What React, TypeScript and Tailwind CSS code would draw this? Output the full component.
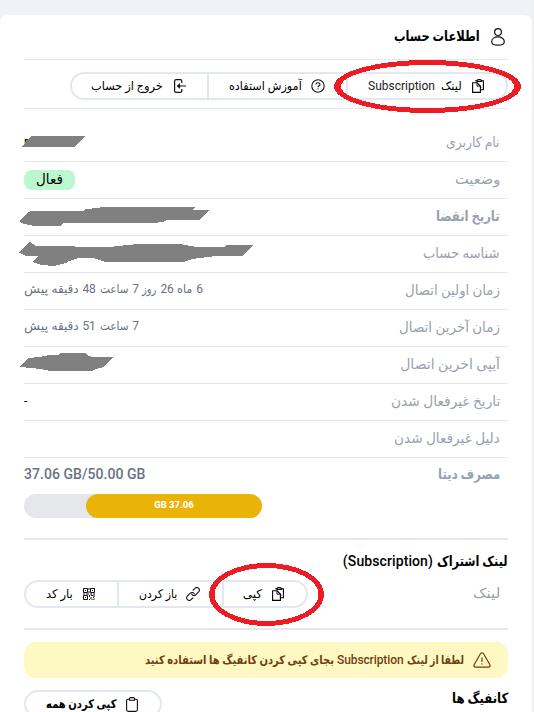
import { useLayoutEffect, useRef, useState, type ReactNode } from "react";

/** A run of Persian text that is condensed to the width of its box. */
function Fa({ className, children }: { className: string; children: string }) {
  const box = useRef<HTMLSpanElement>(null);
  const run = useRef<HTMLSpanElement>(null);
  const [scale, setScale] = useState(1);
  useLayoutEffect(() => {
    if (box.current && run.current) {
      setScale(box.current.clientWidth / run.current.offsetWidth);
    }
  }, [children]);
  return (
    <span ref={box} dir="rtl" className={`block shrink-0 whitespace-nowrap ${className}`}>
      <span ref={run} className="inline-block origin-right" style={{ transform: `scaleX(${scale})` }}>
        {children}
      </span>
    </span>
  );
}

function CopyIcon() {
  return (
    <svg className="h-[14px] w-3 shrink-0" viewBox="0 0 12 14" fill="none" stroke="black" strokeWidth="1.1">
      <path d="M3.7 2.2V1.7h1.1C5.2.9 6 .6 7.2.6s2 .3 2.4 1.1h1.8v9H9" />
      <path d="M4.8 2.5h4.8M4.8 1.7v1.1M9.6 1.7v1.1" />
      <path d="M.6 3.7h4.5l3.3 3.4v6.3H.6z" />
      <path d="M5 3.8v3.3h3.3M5.2 4l4.3 4.2" strokeWidth="0.9" />
    </svg>
  );
}

function HelpIcon() {
  return (
    <svg className="size-[14px] shrink-0" viewBox="0 0 14 14" fill="none" stroke="#111" strokeWidth="1.1">
      <circle cx="7" cy="7" r="6.2" />
      <path d="M5 5.6c0-1.1.8-1.9 2-1.9s2 .7 2 1.7c0 1.4-2 1.4-2 2.9" />
      <path d="M7 9.5v1.1" />
    </svg>
  );
}

function ExitIcon() {
  return (
    <svg className="h-[14px] w-3 shrink-0" viewBox="0 0 12 14" fill="none" stroke="#111" strokeWidth="1.2">
      <path d="M7.8 4V2.2C7.8 1.2 7.3.6 6.3.6H2.2C1.2.6.6 1.2.6 2.2v9.6c0 1 .6 1.6 1.6 1.6h4.1c1 0 1.5-.6 1.5-1.6V10" />
      <path d="M12 7H3.5" />
      <path d="M5.8 4.6 3 7l2.8 2.4Z" fill="#111" strokeWidth="0.5" />
    </svg>
  );
}

function LinkIcon() {
  return (
    <svg className="size-[14px] shrink-0" viewBox="0 0 14 14" fill="none" stroke="#111" strokeWidth="1.1" strokeLinecap="round">
      <path d="M7.1 3.2 9 1.4a2.5 2.5 0 0 1 3.6 3.5L9.7 7.8a2.5 2.5 0 0 1-4-.7" />
      <path d="m6.9 10.8-1.9 1.8a2.5 2.5 0 0 1-3.6-3.5l2.9-2.9a2.5 2.5 0 0 1 4 .7" />
    </svg>
  );
}

function QrIcon() {
  return (
    <svg className="size-3 shrink-0" viewBox="0 0 12 12" fill="none" stroke="#111" strokeWidth="1">
      <path d="M.5.5h4v4h-4zM7.5.5h4v4h-4zM.5 7.5h4v4h-4z" />
      <path d="M2 2.5h1M9 2.5h1M2 9.5h1M0 6h2M3 6h3M7 6h2M10 6h2M6 0v2M6 3v2M6.5 7v2M8 7.5h2M11 7v2M7 10h2M10 9.5h1M6.5 11v1M8.5 11.5h1M11 10.5V12" />
    </svg>
  );
}

function Item({ className, icon, children }: { className: string; icon: ReactNode; children: ReactNode }) {
  return (
    <button className={`flex h-full shrink-0 items-center border-slate-200 ${className}`}>
      {icon}
      {children}
    </button>
  );
}

function Row({ label, children }: { label: ReactNode; children?: ReactNode }) {
  return (
    <div className="flex h-[37px] items-center justify-between border-b border-gray-200 pr-2 pb-0.5 text-gray-400">
      {label}
      {children}
    </div>
  );
}

function Ago({ children }: { children: ReactNode }) {
  return <div className="-mt-0.5 flex items-center gap-[3.7px] text-xs text-gray-500">{children}</div>;
}

function Marks() {
  return (
    <svg className="pointer-events-none absolute top-0 left-0 h-[712px] w-[534px]" viewBox="0 0 534 712" shapeRendering="crispEdges">
      <g fill="#808080">
        <path d="M22 146.5 31 136H85.5L75.5 146.5Z" />
        <path d="M19 221 29 212 31 211H83L86 209 98 208 102 207H195L192 210H209L199 220H167L163 222 153 223H63L60 226H34L24 224Z" />
        <path d="M19 252.5 30 242 36 246H73L76 247H109L128 245 137 244H181L190 246 197 247H224L227 245H253L242 256H216L192 259 184 262H105L93 258H79L69 261 66 263 54 266 42 265 32 262 38 256H26Z" />
        <path d="M19 367 28 358 39 357 50 355 58 355 60 353H85L89 356 93 357H113L104 367 96 369 92 371H50L40 369 32 368Z" />
      </g>
      <g fill="#ed1c24" fillRule="evenodd">
        <path d="M334 86.5a93.5 26.5 0 0 1 187 0a93.5 26.5 0 0 1-187 0ZM341 86.500a86.500 21.500 0 0 0 173 0a86.500 21.500 0 0 0-173 0Z" />
        <path d="M209 594.500a57.500 31.500 0 0 1 115 0a57.500 31.500 0 0 1-115 0ZM214.500 594.500a52 26.500 0 0 0 104 0a52 26.500 0 0 0-104 0Z" />
      </g>
    </svg>
  );
}

export default function App() {
  return (
    <div
      dir="rtl"
      className="relative h-[712px] w-[534px] overflow-hidden bg-[#eff3f8] font-['Roboto','DejaVu_Sans',sans-serif]"
    >
      <div className="h-[712px] border-r-2 border-[#f0f0f0] pt-[15px]">
        <main className="h-[697px] rounded-t-lg bg-white px-6 text-black">
          <header className="flex h-[45px] items-center border-b border-gray-200 pr-[3px]">
            <svg className="h-[18px] w-[14px]" viewBox="0 0 14 18" fill="none" stroke="#111" strokeWidth="1.2">
              <circle cx="7" cy="4.1" r="3.4" />
              <path d="M7 8.9c3.5 0 6.3 1.9 6.3 4.5 0 3-2.5 3.8-6.3 3.8S.7 16.4.7 13.4C.7 10.8 3.5 8.9 7 8.9Z" />
            </svg>
            <Fa className="mr-[11px] mb-0.5 w-[86px] text-[14px] font-bold">اطلاعات حساب</Fa>
          </header>

          <section className="flex h-[49px] items-center border-b border-gray-200 text-xs">
            <div className="mt-[3px] flex h-7 w-[438px] overflow-hidden rounded-full border-2 border-slate-200">
              <Item className="w-[158px] pr-[22px]" icon={<CopyIcon />}>
                <Fa className="mr-[10px] w-[21px]">لینک</Fa>
                <span className="mr-[6px] text-[#222]">Subscription</span>
              </Item>
              <Item className="w-[139px] border-r-2 pr-[21px]" icon={<HelpIcon />}>
                <Fa className="mr-[9px] w-[73px]">آموزش استفاده</Fa>
              </Item>
              <Item className="grow border-r-2 pr-[21px]" icon={<ExitIcon />}>
                <Fa className="mr-[11px] w-[72px]">خروج از حساب</Fa>
              </Item>
            </div>
          </section>

          <section className="pt-4 text-[14px]">
            <Row label={<Fa className="w-[54px]">نام کاربری</Fa>}>
              <span className="text-xs text-black">r</span>
            </Row>
            <Row label={<Fa className="w-[45px]">وضعیت</Fa>}>
              <span className="mt-0.5 flex h-5 w-[51px] items-center justify-center rounded-lg bg-[#bbf7d0] pb-0.5 text-black">
                <Fa className="w-[27px]">فعال</Fa>
              </span>
            </Row>
            <Row label={<Fa className="w-[64px] font-bold">تاریخ انقضا</Fa>} />
            <Row label={<Fa className="w-[77px]">شناسه حساب</Fa>} />
            <Row label={<Fa className="w-[95px]">زمان اولین اتصال</Fa>}>
              <Ago>
                <span>6</span>
                <Fa className="w-[15px]">ماه</Fa>
                <span>26</span>
                <Fa className="w-[14px]">روز</Fa>
                <span>7</span>
                <Fa className="w-[29px]">ساعت</Fa>
                <span>48</span>
                <Fa className="w-[27px]">دقیقه</Fa>
                <Fa className="w-[24px]">پیش</Fa>
              </Ago>
            </Row>
            <Row label={<Fa className="w-[101px]">زمان آخرین اتصال</Fa>}>
              <Ago>
                <span>7</span>
                <Fa className="w-[29px]">ساعت</Fa>
                <span>51</span>
                <Fa className="w-[27px]">دقیقه</Fa>
                <Fa className="w-[24px]">پیش</Fa>
              </Ago>
            </Row>
            <Row label={<Fa className="w-[100px]">آیپی اخرین اتصال</Fa>} />
            <Row label={<Fa className="w-[109px]">تاریخ غیرفعال شدن</Fa>}>
              <span className="text-xs text-black">-</span>
            </Row>
            <Row label={<Fa className="w-[106px]">دلیل غیرفعال شدن</Fa>} />
            <div className="flex h-[82px] justify-between border-b-2 border-gray-200 pt-[6px] pr-2">
              <Fa className="w-[62px] font-bold text-gray-400">مصرف دیتا</Fa>
              <div className="w-[238px] text-gray-500">
                <div dir="ltr" className="text-left leading-5 font-medium tracking-[0.05px]">37.06 GB/50.00 GB</div>
                <div className="mt-[10px] h-6 rounded-full bg-gray-200">
                  <div dir="ltr" className="flex h-6 w-[176px] items-center justify-center rounded-full bg-[#eab308] pb-px text-[9.5px] font-extrabold text-white">
                    GB 37.06
                  </div>
                </div>
              </div>
            </div>
          </section>

          <section className="h-[90px] border-b-2 border-gray-200 pt-[11px]">
            <h2 className="flex h-5 items-center text-[14px] font-medium">
              <Fa className="w-[71px] font-bold">لینک اشتراک</Fa>
              <span dir="ltr" className="mr-1 tracking-[0.1px]">(Subscription)</span>
            </h2>
            <div className="mt-[9px] flex items-center justify-between pr-2">
              <Fa className="mb-0.5 w-[27px] text-[14px] text-gray-400">لینک</Fa>
              <div className="flex h-7 w-[284px] overflow-hidden rounded-full border-2 border-slate-200 text-xs">
                <Item className="w-[82px] pr-[22px]" icon={<CopyIcon />}>
                  <Fa className="mr-[10px] w-[19px]">کپی</Fa>
                </Item>
                <Item className="w-[105px] border-r-2 pr-[22px]" icon={<LinkIcon />}>
                  <Fa className="mr-[9px] w-[38px]">باز کردن</Fa>
                </Item>
                <Item className="grow border-r-2 pr-[22px]" icon={<QrIcon />}>
                  <Fa className="mr-[10px] w-[27px]">بار کد</Fa>
                </Item>
              </div>
            </div>
          </section>

          <div className="mt-3 flex h-9 items-center rounded-xl bg-[#fef9c3] pr-[17px] text-xs font-medium text-[#713f12]">
            <svg className="h-4 w-[18px] shrink-0" viewBox="0 0 18 16" fill="none" stroke="currentColor" strokeWidth="1.2" strokeLinecap="round">
              <path d="M7.6 1.5c.6-1 2.2-1 2.8 0l6.5 11.3c.6 1.1-.1 2.4-1.4 2.4h-13c-1.3 0-2-1.3-1.4-2.4Z" />
              <path d="M9 5.9v3.7M9 11.8v.3" />
            </svg>
            <Fa className="mr-[9px] w-[57px] font-bold">لطفا از لینک</Fa>
            <span dir="ltr" className="mr-[3px] w-[67px] text-left tracking-[-0.1px]">Subscription</span>
            <Fa className="mr-[3px] w-[189px] font-bold">بجای کپی کردن کانفیگ ها استفاده کنید</Fa>
          </div>

          <footer className="mt-3 flex justify-between font-bold">
            <Fa className="-mt-0.5 w-[56px] text-[14px]">کانفیگ ها</Fa>
            <button className="flex h-7 w-[138px] items-center rounded-full border-2 border-slate-200 pr-[22px] text-xs">
              <svg className="h-[15px] w-3 shrink-0" viewBox="0 0 12 15" fill="none" stroke="#111" strokeWidth="1.1">
                <path d="M3.5 2.2H2.2C1.2 2.2.6 2.8.6 3.8v9c0 1 .6 1.6 1.6 1.6h7.6c1 0 1.6-.6 1.6-1.6v-9c0-1-.6-1.6-1.6-1.6H8.5" />
                <path d="M3.5 3.3V1.7C3.5 1 4 .6 4.6.6h2.800c.7 0 1.100.4 1.100 1.100v1.600Z" />
              </svg>
              <Fa className="mr-[10px] w-[70px]">کپی کردن همه</Fa>
            </button>
          </footer>
        </main>
      </div>
      <Marks />
    </div>
  );
}
